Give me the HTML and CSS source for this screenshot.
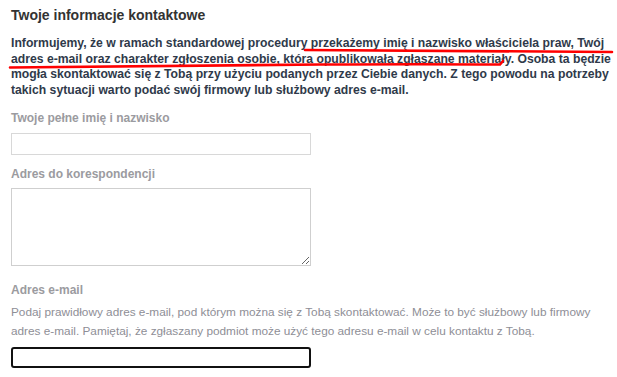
FILE: index.html
```html
<!DOCTYPE html>
<html>
<head>
    <title>Twoje informacje kontaktowe</title>
    <link rel="stylesheet" href="styles.css">
</head>
<body>
    <div class="contact-section">
        <h2>Twoje informacje kontaktowe</h2>
        <p class="intro">Informujemy, że w ramach standardowej procedury przekażemy imię i nazwisko właściciela praw, Twój adres e-mail oraz charakter zgłoszenia osobie, która opublikowała zgłaszane materiały. Osoba ta będzie mogła skontaktować się z Tobą przy użyciu podanych przez Ciebie danych. Z tego powodu na potrzeby takich sytuacji warto podać swój firmowy lub służbowy adres e-mail.</p>

        <div class="form-group first">
            <label for="fullname">Twoje pełne imię i nazwisko</label>
            <input type="text" id="fullname">
        </div>
        <div class="form-group">
            <label for="address">Adres do korespondencji</label>
            <textarea id="address"></textarea>
        </div>
        <div class="form-group email">
            <label for="email">Adres e-mail</label>
            <p class="help">Podaj prawidłowy adres e-mail, pod którym można się z Tobą skontaktować. Może to być służbowy lub firmowy adres e-mail. Pamiętaj, że zgłaszany podmiot może użyć tego adresu e-mail w celu kontaktu z Tobą.</p>
            <input type="email" id="email" class="focused">
        </div>
    </div>

    <!-- red marker strokes drawn over the paragraph -->
    <svg class="marks" width="617" height="377" viewBox="0 0 617 377">
        <path d="M305 50 Q 460 50.5 612 52" />
        <path d="M10 67.5 Q 200 65.5 320 64.5 Q 420 64 500 64.5 L 503 61" />
    </svg>
</body>
</html>
```

FILE: styles.css
```css
* {
    box-sizing: border-box;
}

body {
    margin: 0;
    font-family: "Liberation Sans", Arial, sans-serif;
    background: white;
}

.contact-section {
    width: 617px;
    padding: 6px 0 0 11px;
}

.contact-section h2 {
    margin: 0;
    font-size: 14px;
    line-height: 18px;
    font-weight: bold;
    color: #333;
}

.intro {
    margin: 12px 0 0 0;
    font-size: 12.2px;
    font-weight: bold;
    line-height: 15.5px;
    color: #2f3a4a;
}

.form-group {
    display: flex;
    flex-direction: column;
    margin-top: 11px;
}

.form-group.first {
    margin-top: 12px;
}

.form-group.email {
    margin-top: 16px;
}

.form-group label {
    font-size: 12px;
    font-weight: bold;
    line-height: 16px;
    color: #9b9ba0;
    margin-bottom: 7px;
}

.form-group input,
.form-group textarea {
    width: 300px;
    margin: 0;
    font-family: inherit;
    font-size: 13px;
    border: 1px solid #d8d8d8;
    border-radius: 0;
    background: white;
    outline: none;
}

.form-group input {
    height: 22px;
}

.form-group textarea {
    height: 78px;
    margin-top: -1px;
    border-color: #cfcfcf;
}

.help {
    margin: -2px 0 7px 0;
    font-size: 11.8px;
    line-height: 18.5px;
    color: #8e8e96;
}

.form-group input.focused {
    height: 21px;
    border: 2px solid #111;
    border-radius: 3px;
}

.marks {
    position: absolute;
    top: 0;
    left: 0;
    pointer-events: none;
}

.marks path {
    fill: none;
    stroke: #f00;
    stroke-width: 2.6;
    stroke-linecap: round;
}
```
